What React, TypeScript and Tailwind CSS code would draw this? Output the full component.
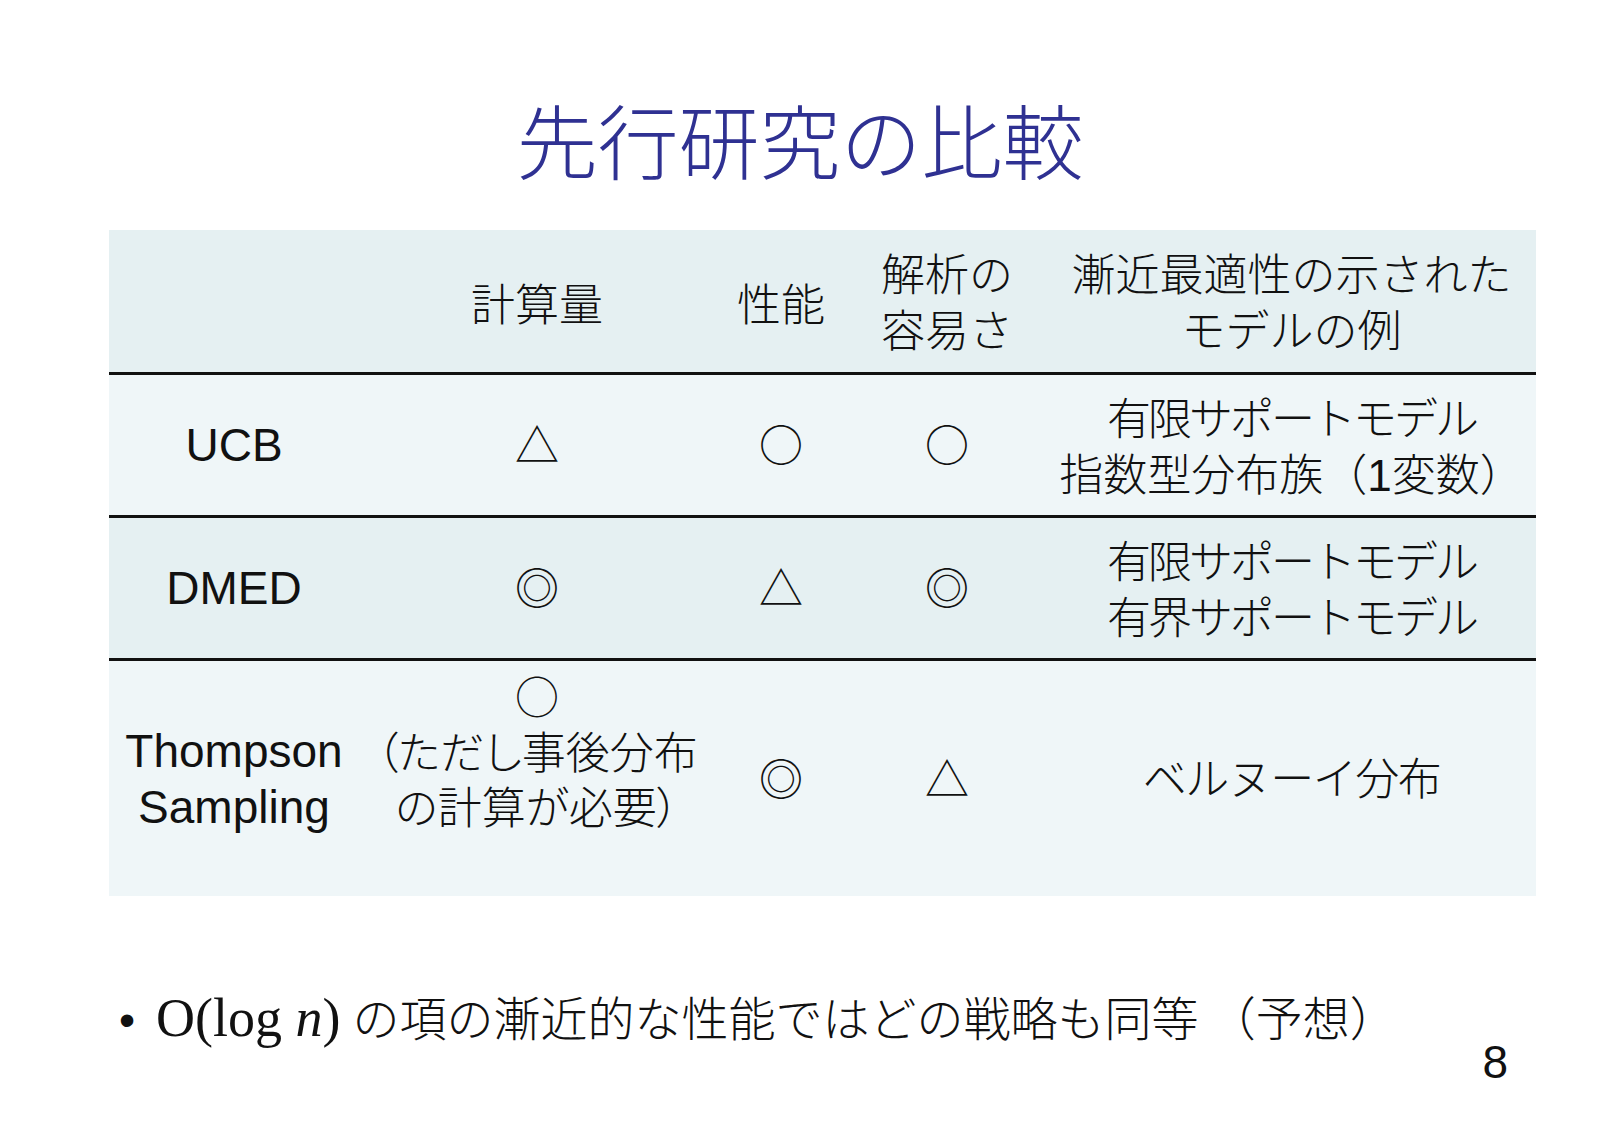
import React from "react";

const CJK = "font-['Noto_Sans_CJK_JP',sans-serif]";

function Cell({ children, className = "" }: { children: React.ReactNode; className?: string }) {
  return (
    <div className={`flex items-center justify-center text-center text-[44px] leading-[56px] ${className}`}>
      <div>{children}</div>
    </div>
  );
}

function Sym({ s }: { s: string }) {
  return <span className="font-['Noto_Sans_CJK_JP',sans-serif] text-[44px]">{s}</span>;
}

export default function App() {
  return (
    <div className="w-[1600px] h-[1131px] bg-white flex flex-col text-[#111] font-['Liberation_Sans','Noto_Sans_CJK_JP',sans-serif]">
      <h1 className="pt-[97px] text-center text-[81px] leading-[81px] text-[#2f3192] font-['Noto_Sans_CJK_JP',sans-serif] font-light">
        先行研究の比較
      </h1>

      <div className="ml-[109px] mt-[52px] w-[1427px] flex flex-col">
        {/* header */}
        <div className="grid grid-cols-[250px_356px_132px_200px_489px] h-[145px] bg-[#e5f0f2] border-b-[3px] border-[#111] font-light">
          <Cell>{""}</Cell>
          <Cell className="pt-[10px]">計算量</Cell>
          <Cell className="pt-[10px]">性能</Cell>
          <Cell className="pt-[6px]">
            解析の
            <br />
            容易さ
          </Cell>
          <Cell className="pt-[6px]">
            漸近最適性の示された
            <br />
            モデルの例
          </Cell>
        </div>

        {/* UCB */}
        <div className="grid grid-cols-[250px_356px_132px_200px_489px] h-[143px] bg-[#eff6f8] border-b-[3px] border-[#111]">
          <Cell className="text-[46px]">UCB</Cell>
          <Cell>
            <Sym s="△" />
          </Cell>
          <Cell>
            <Sym s="○" />
          </Cell>
          <Cell>
            <Sym s="○" />
          </Cell>
          <Cell className="pt-[6px] font-light">
            <span className="tracking-[-3px]">有限サポートモデル</span>
            <br />
            指数型分布族（1変数）
          </Cell>
        </div>

        {/* DMED */}
        <div className="grid grid-cols-[250px_356px_132px_200px_489px] h-[143px] bg-[#e5f0f2] border-b-[3px] border-[#111]">
          <Cell className="text-[46px]">DMED</Cell>
          <Cell>
            <Sym s="◎" />
          </Cell>
          <Cell>
            <Sym s="△" />
          </Cell>
          <Cell>
            <Sym s="◎" />
          </Cell>
          <Cell className="pt-[6px] font-light tracking-[-3px]">
            有限サポートモデル
            <br />
            有界サポートモデル
          </Cell>
        </div>

        {/* Thompson */}
        <div className="grid grid-cols-[250px_356px_132px_200px_489px] h-[235px] bg-[#eff6f8]">
          <Cell className="text-[46px]">
            Thompson
            <br />
            Sampling
          </Cell>
          <div className="flex justify-center items-start pt-[7px] text-center text-[44px] leading-[55px] font-light">
            <div>
              <Sym s="○" />
              <br />
              <span className="[font-feature-settings:'palt']">（ただし事後分布</span>
              <br />
              <span className="[font-feature-settings:'palt']">の計算が必要）</span>
            </div>
          </div>
          <Cell>
            <Sym s="◎" />
          </Cell>
          <Cell>
            <Sym s="△" />
          </Cell>
          <Cell className="pt-[2px] font-light tracking-[-1.5px]">ベルヌーイ分布</Cell>
        </div>
      </div>

      <div className="mt-[90px] pl-[119px] flex items-baseline text-[#111]">
        <span className="w-[37px] text-[46px] leading-[60px] font-['Liberation_Sans',sans-serif]">•</span>
        <span className="text-[54px] leading-[60px] font-['Liberation_Serif',serif]">
          O(log <i>n</i>)
        </span>
        <span className={`ml-[12px] text-[47px] leading-[60px] font-light ${CJK}`}>
          の項の漸近的な性能ではどの戦略も同等 （予想）
        </span>
      </div>

      <div className="mt-[-11px] pr-[92px] flex justify-end">
        <span className="text-[46px] leading-[46px] font-['Liberation_Sans',sans-serif]">8</span>
      </div>
    </div>
  );
}
